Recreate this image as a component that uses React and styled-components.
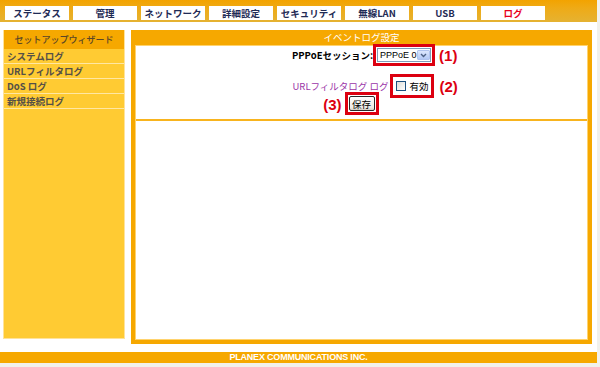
import React from "react";
import styled, { createGlobalStyle } from "styled-components";

const GlobalStyle = createGlobalStyle`
  body {
    margin: 0;
    background: #f1f1ec;
    font-family: "Noto Sans CJK JP", "Noto Sans", sans-serif;
  }
`;

const ORANGE = "#f6a800";
const RED = "#dc0010";

const Page = styled.div`
  width: 597px;
  height: 363px;
  background: #fff;
  display: flex;
  flex-direction: column;
`;

const TopBar = styled.div`
  height: 22px;
  box-sizing: border-box;
  padding: 6px 0 0 5px;
  display: flex;
  gap: 4px;
  background: linear-gradient(to bottom, #f3a300 0%, #eeab18 40%, #e5b232 100%);
`;

const Tab = styled.div`
  width: 64px;
  height: 14px;
  background: #fff;
  display: flex;
  align-items: center;
  justify-content: center;
  font-size: 9.5px;
  font-weight: bold;
  color: ${p => (p.active ? "#e8001c" : "#1f2b55")};
`;

const Body = styled.div`
  display: flex;
  gap: 6px;
  padding: 8px 0 0 3px;
  height: 314px;
`;

const Sidebar = styled.div`
  width: 122px;
  height: 309px;
  box-sizing: border-box;
  background: #ffcb33;
  border: 1px solid #ffe39a;
  border-top: none;
`;

const SideHeader = styled.div`
  height: 19px;
  background: ${ORANGE};
  color: #5a4626;
  font-size: 9px;
  font-weight: 500;
  display: flex;
  align-items: center;
  justify-content: center;
`;

const SideItem = styled.div`
  height: 14px;
  line-height: 14px;
  border-bottom: 1px solid #ffe7a3;
  padding-left: 3px;
  font-size: 9.5px;
  font-weight: bold;
  color: #555047;
`;

const Main = styled.div`
  width: 461px;
  height: 314px;
  box-sizing: border-box;
  background: ${ORANGE};
  padding: 0 4px 4px;
  display: flex;
  flex-direction: column;
`;

const MainTitle = styled.div`
  height: 15px;
  line-height: 15px;
  text-align: center;
  color: #fff;
  font-size: 9.5px;
`;

const Inner = styled.div`
  flex: 1;
  background: #fff;
  border: 1px solid #ffd36e;
  display: flex;
  flex-direction: column;
`;

const FormSection = styled.div`
  height: 73px;
  border-bottom: 2px solid #f8b41e;
  display: flex;
  flex-direction: column;
  align-items: center;
`;

const Row = styled.div`
  display: flex;
  align-items: center;
  justify-content: center;
  margin-top: ${p => p.top}px;
  height: ${p => p.h}px;
`;

const Label = styled.span`
  font-size: 9.5px;
  font-weight: ${p => (p.bold ? "bold" : "normal")};
  color: ${p => p.color || "#000"};
  margin-right: ${p => p.gap || 0}px;
  white-space: nowrap;
`;

const Marked = styled.span`
  position: relative;
  display: inline-flex;
  align-items: center;
  padding: ${p => p.pad || 0}px;
  outline: 3px solid ${RED};
  outline-offset: ${p => p.offset}px;
`;

const Note = styled.span`
  position: absolute;
  top: 50%;
  transform: translateY(-50%);
  ${p => (p.side === "left" ? `right: calc(100% + ${p.dist}px);` : `left: calc(100% + ${p.dist}px);`)}
  font-family: "Liberation Sans", Arial, sans-serif;
  font-weight: bold;
  font-size: 15px;
  color: ${RED};
  white-space: nowrap;
`;

const Select = styled.div`
  width: 54px;
  height: 14px;
  box-sizing: border-box;
  border: 1px solid #7f9db9;
  background: #fff;
  display: flex;
  align-items: center;
  justify-content: space-between;
  padding: 0 1px 0 2px;
  font-family: "Liberation Sans", Arial, sans-serif;
  font-size: 9px;
  white-space: nowrap;
  color: #000;
`;

const Arrow = styled.span`
  flex: none;
  width: 13px;
  height: 10px;
  border-radius: 1px;
  background: linear-gradient(to bottom, #dce7fd, #b3c9f5);
  border: 1px solid #b0c4ef;
  box-sizing: border-box;
  display: flex;
  align-items: center;
  justify-content: center;
`;

const Check = styled.span`
  width: 10px;
  height: 10px;
  box-sizing: border-box;
  border: 1px solid #1c5180;
  background: linear-gradient(135deg, #dcdcd7, #fff);
  margin: 0 3px 0 1px;
`;

const Button = styled.div`
  width: 26px;
  height: 15px;
  box-sizing: border-box;
  border: 1px solid #2a2a2a;
  border-radius: 2px;
  background: linear-gradient(to bottom, #fff, #ecebe6 80%, #d6d0c5);
  display: flex;
  align-items: center;
  justify-content: center;
  font-size: 9.5px;
  color: #000;
`;

const Blank = styled.div`
  flex: 1;
`;

const Footer = styled.div`
  margin-top: 8px;
  height: 11px;
  background: ${ORANGE};
  color: #fff;
  text-align: center;
  line-height: 11px;
  font-family: "Liberation Sans Narrow", "Liberation Sans", Arial, sans-serif;
  font-weight: bold;
  font-size: 9px;
  letter-spacing: -0.2px;
`;

const tabs = ["ステータス", "管理", "ネットワーク", "詳細設定", "セキュリティ", "無線LAN", "USB", "ログ"];
const menu = ["システムログ", "URLフィルタログ", "DoS ログ", "新規接続ログ"];

export default function App() {
  return (
    <>
      <GlobalStyle />
      <Page>
        <TopBar>
          {tabs.map(t => (
            <Tab key={t} active={t === "ログ"}>{t}</Tab>
          ))}
        </TopBar>
        <Body>
          <Sidebar>
            <SideHeader>セットアップウィザード</SideHeader>
            {menu.map(m => (
              <SideItem key={m}>{m}</SideItem>
            ))}
          </Sidebar>
          <Main>
            <MainTitle>イベントログ設定</MainTitle>
            <Inner>
              <FormSection>
                <Row top={2} h={14}>
                  <Label bold gap={4}>PPPoEセッション:</Label>
                  <Marked offset={1}>
                    <Select>
                      PPPoE 0
                      <Arrow>
                        <svg width="7" height="5" viewBox="0 0 7 5">
                          <path d="M1 1 L3.5 3.5 L6 1" fill="none" stroke="#4d6185" strokeWidth="1.4" />
                        </svg>
                      </Arrow>
                    </Select>
                    <Note dist={8}>(1)</Note>
                  </Marked>
                </Row>
                <Row top={17} h={13}>
                  <Label color="#9b35a8" gap={5}>URLフィルタログ ログ</Label>
                  <Marked offset={0} pad={2}>
                    <Check />
                    <Label>有効</Label>
                    <Note dist={9}>(2)</Note>
                  </Marked>
                </Row>
                <Row top={4} h={15}>
                  <Marked offset={1}>
                    <Button>保存</Button>
                    <Note side="left" dist={7}>(3)</Note>
                  </Marked>
                </Row>
              </FormSection>
              <Blank />
            </Inner>
          </Main>
        </Body>
        <Footer>PLANEX COMMUNICATIONS INC.</Footer>
      </Page>
    </>
  );
}
